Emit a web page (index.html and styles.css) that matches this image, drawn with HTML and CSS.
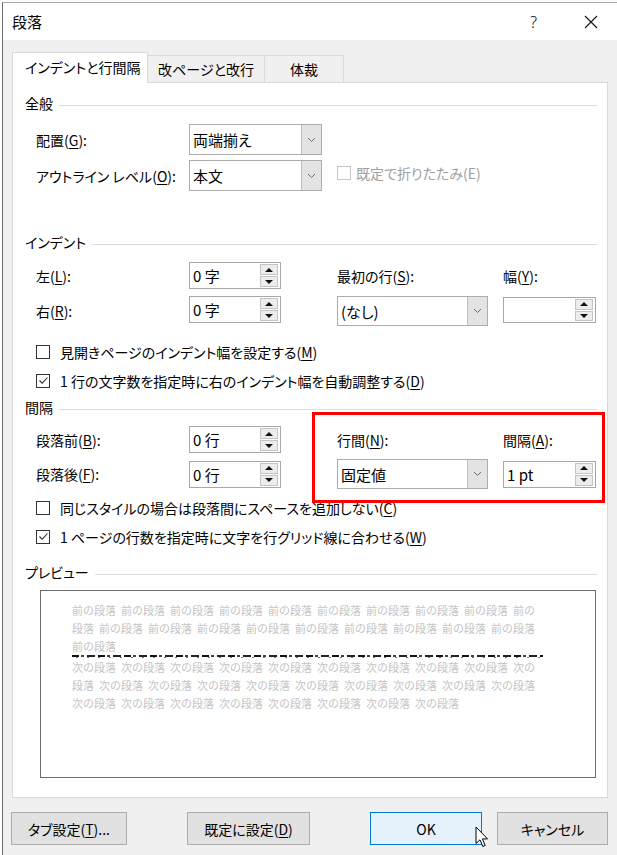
FILE: index.html
```html
<!DOCTYPE html>
<html lang="ja">
<head>
<meta charset="utf-8">
<title>段落</title>
<link rel="stylesheet" href="styles.css">
</head>
<body>
<div class="dialog">
  <div class="titlebar">
    <span class="title">段落</span>
    <span class="help">?</span>
    <svg class="close" width="14" height="14" viewBox="0 0 14 14"><path d="M1 1 L13 13 M13 1 L1 13" stroke="#111" stroke-width="1.1" fill="none"/></svg>
  </div>
  <div class="body">
    <div class="tabs">
      <div class="tab active">インデントと行間隔</div>
      <div class="tab">改ページと改行</div>
      <div class="tab narrow">体裁</div>
    </div>
    <div class="panel">
      <div class="section-head s-general"><span>全般</span><i></i></div>
      <div class="grid-general">
        <div class="label">配置(<u>G</u>):</div>
        <div class="select w133"><span class="val">両端揃え</span><span class="drop"><svg width="9" height="6" viewBox="0 0 9 6"><path d="M1 1 L4.5 4.5 L8 1" stroke="#6b6b6b" fill="none"/></svg></span></div>
        <div></div>
        <div class="label">アウトライン レベル(<u>O</u>):</div>
        <div class="select w133"><span class="val">本文</span><span class="drop"><svg width="9" height="6" viewBox="0 0 9 6"><path d="M1 1 L4.5 4.5 L8 1" stroke="#6b6b6b" fill="none"/></svg></span></div>
        <div class="check disabled"><span class="box"></span><span>既定で折りたたみ(E)</span></div>
      </div>

      <div class="section-head s-indent"><span>インデント</span><i></i></div>
      <div class="grid-four g-indent">
        <div class="label">左(<u>L</u>):</div>
        <div class="spin"><span class="val">0 字</span><span class="arrows"><span class="up"></span><span class="down"></span></span></div>
        <div class="label">最初の行(<u>S</u>):</div>
        <div class="label">幅(<u>Y</u>):</div>
        <div class="label">右(<u>R</u>):</div>
        <div class="spin top"><span class="val">0 字</span><span class="arrows"><span class="up"></span><span class="down"></span></span></div>
        <div class="select w151"><span class="val">(なし)</span><span class="drop"><svg width="9" height="6" viewBox="0 0 9 6"><path d="M1 1 L4.5 4.5 L8 1" stroke="#6b6b6b" fill="none"/></svg></span></div>
        <div class="spin w93 top1"><span class="val"></span><span class="arrows"><span class="up"></span><span class="down"></span></span></div>
      </div>
      <div class="checks c-indent">
        <div class="check"><span class="box"></span><span>見開きページのインデント幅を設定する(<u>M</u>)</span></div>
        <div class="check"><span class="box"><svg width="11" height="11" viewBox="0 0 11 11"><path d="M1.5 5.5 L4.2 8.2 L9.5 2.5" stroke="#333" stroke-width="1.1" fill="none"/></svg></span><span>1 行の文字数を指定時に右のインデント幅を自動調整する(<u>D</u>)</span></div>
      </div>

      <div class="section-head s-space"><span>間隔</span><i></i></div>
      <div class="grid-four g-space">
        <div class="label">段落前(<u>B</u>):</div>
        <div class="spin"><span class="val">0 行</span><span class="arrows"><span class="up"></span><span class="down"></span></span></div>
        <div class="label">行間(<u>N</u>):</div>
        <div class="label">間隔(<u>A</u>):</div>
        <div class="label">段落後(<u>F</u>):</div>
        <div class="spin"><span class="val">0 行</span><span class="arrows"><span class="up"></span><span class="down"></span></span></div>
        <div class="select w151"><span class="val">固定値</span><span class="drop"><svg width="9" height="6" viewBox="0 0 9 6"><path d="M1 1 L4.5 4.5 L8 1" stroke="#6b6b6b" fill="none"/></svg></span></div>
        <div class="spin w93"><span class="val">1 pt</span><span class="arrows"><span class="up"></span><span class="down"></span></span></div>
      </div>
      <div class="checks c-space">
        <div class="check"><span class="box"></span><span>同じスタイルの場合は段落間にスペースを追加しない(<u>C</u>)</span></div>
        <div class="check"><span class="box"><svg width="11" height="11" viewBox="0 0 11 11"><path d="M1.5 5.5 L4.2 8.2 L9.5 2.5" stroke="#333" stroke-width="1.1" fill="none"/></svg></span><span>1 ページの行数を指定時に文字を行グリッド線に合わせる(<u>W</u>)</span></div>
      </div>

      <div class="section-head s-preview"><span>プレビュー</span><i></i></div>
      <div class="preview">
        <div class="pline"><span>前の段落</span><span>前の段落</span><span>前の段落</span><span>前の段落</span><span>前の段落</span><span>前の段落</span><span>前の段落</span><span>前の段落</span><span>前の段落</span><span>前の</span></div>
        <div class="pline"><span>段落</span><span>前の段落</span><span>前の段落</span><span>前の段落</span><span>前の段落</span><span>前の段落</span><span>前の段落</span><span>前の段落</span><span>前の段落</span><span>前の段落</span></div>
        <div class="pline"><span>前の段落</span></div>
        <div class="dash"></div>
        <div class="pline"><span>次の段落</span><span>次の段落</span><span>次の段落</span><span>次の段落</span><span>次の段落</span><span>次の段落</span><span>次の段落</span><span>次の段落</span><span>次の段落</span><span>次の</span></div>
        <div class="pline"><span>段落</span><span>次の段落</span><span>次の段落</span><span>次の段落</span><span>次の段落</span><span>次の段落</span><span>次の段落</span><span>次の段落</span><span>次の段落</span><span>次の段落</span></div>
        <div class="pline"><span>次の段落</span><span>次の段落</span><span>次の段落</span><span>次の段落</span><span>次の段落</span><span>次の段落</span><span>次の段落</span><span>次の段落</span></div>
      </div>

      <div class="highlight"></div>
    </div>

    <div class="buttons">
      <div class="group">
        <div class="btn b-tab">タブ設定(<u>T</u>)...</div>
        <div class="btn b-default">既定に設定(<u>D</u>)</div>
      </div>
      <div class="group">
        <div class="btn b-ok primary">OK</div>
        <div class="btn b-cancel">キャンセル</div>
      </div>
    </div>
  </div>
  <svg class="cursor" width="14" height="23" viewBox="0 0 14 23"><path d="M1 1 L1 17.5 L5 13.8 L7.8 20.5 L10.2 19.5 L7.4 12.9 L12.5 12.9 Z" fill="#fff" stroke="#000" stroke-width="1" stroke-linejoin="round"/></svg>
</div>
</body>
</html>
```

FILE: styles.css
```css
* { box-sizing: border-box; }

html, body {
  margin: 0;
  padding: 0;
  background: #ffffff;
}

body {
  font-family: "Noto Sans CJK JP", "Noto Sans", sans-serif;
  font-size: 14px;
  font-feature-settings: "palt";
  color: #000;
  width: 617px;
  height: 855px;
  overflow: hidden;
}

u { text-decoration: underline; text-underline-offset: 2px; text-decoration-thickness: 1px; }

.dialog {
  position: relative;
  margin: 2px 0 0 2px;
  border-top: 1px solid #a8a8a8;
  border-left: 1px solid #6e6e6e;
  height: 853px;
  background: #f0f0f0;
}

.titlebar {
  height: 37px;
  background: #fff;
  display: flex;
  align-items: center;
  padding-left: 9px;
  font-size: 15px;
}

.title { flex: 1; }

.help {
  font-family: "Noto Sans", sans-serif;
  font-weight: 300;
  font-size: 16px;
  margin-right: 47px;
}

.close { margin-right: 19px; }

.body { padding-top: 12px; }

.tabs {
  display: flex;
  align-items: flex-end;
  padding-left: 9px;
  height: 30px;
}

.tab {
  height: 27px;
  padding: 0;
  display: flex;
  align-items: center;
  justify-content: center;
  white-space: nowrap;
  background: #f0f0f0;
  border: 1px solid #d9d9d9;
  border-bottom: none;
  border-left: none;
  width: 117px;
}

.tab.narrow { width: 79px; }

.tab.active {
  background: #fff;
  height: 31px;
  width: 136px;
  border-left: 1px solid #d9d9d9;
  margin-bottom: -1px;
  position: relative;
  z-index: 2;
  justify-content: flex-start;
  padding-left: 12px;
  padding-bottom: 2px;
}

.panel {
  position: relative;
  margin: 0 9px;
  background: #fff;
  border: 1px solid #d9d9d9;
  padding: 10px 10px 19px 12px;
  height: 716px;
}

.section-head {
  display: flex;
  align-items: center;
  height: 20px;
}

.section-head i {
  flex: 1;
  height: 1px;
  background: #dcdcdc;
  margin-left: 6px;
  margin-top: 4px;
}

.s-indent { margin-top: 41px; }
.s-space { margin-top: 2px; }
.s-preview { margin-top: 11px; }

.label { align-self: center; white-space: nowrap; }

.grid-general {
  margin: 11px 0 0 11px;
  display: grid;
  grid-template-columns: 153px 148px auto;
  grid-template-rows: 31px 31px;
  row-gap: 5px;
  align-items: center;
}

.grid-four {
  margin-left: 11px;
  display: grid;
  grid-template-columns: 153px 148px 166px 93px;
}

.g-indent {
  margin-top: 10px;
  grid-template-rows: 27px 30px;
  row-gap: 7px;
}

.g-space {
  margin-top: 9px;
  grid-template-rows: 27px 30px;
  row-gap: 6px;
}

.select {
  height: 31px;
  border: 1px solid #adadad;
  background: #fff;
  display: flex;
  align-items: center;
  padding-left: 3px;
  font-size: 15px;
}

.g-indent .select, .g-space .select { height: 30px; }

.w133 { width: 133px; }
.w151 { width: 151px; }

.select .val { flex: 1; }

.select .drop {
  align-self: stretch;
  width: 20px;
  background: #e3e3e3;
  border-left: 1px solid #bdbdbd;
  display: flex;
  align-items: center;
  justify-content: center;
}

.spin {
  width: 92px;
  height: 27px;
  border: 1px solid #a8a8a8;
  background: #fff;
  display: flex;
  align-items: center;
  padding: 1px 1px 1px 3px;
  align-self: center;
  font-size: 15px;
}

.spin.top { align-self: start; }
.spin.top1 { align-self: start; margin-top: 1px; height: 26px; }

.spin.w93 { width: 93px; }

.spin .val { flex: 1; }

.spin .arrows {
  align-self: stretch;
  width: 18px;
  margin-right: 1px;
  display: flex;
  flex-direction: column;
  gap: 1px;
}

.spin .up, .spin .down {
  flex: 1;
  background: #ececec;
  border: 1px solid #c4c4c4;
  display: flex;
  align-items: center;
  justify-content: center;
}

.spin .up::after {
  content: "";
  border-left: 4px solid transparent;
  border-right: 4px solid transparent;
  border-bottom: 4px solid #111;
}

.spin .down::after {
  content: "";
  border-left: 4px solid transparent;
  border-right: 4px solid transparent;
  border-top: 4px solid #111;
}

.check {
  display: flex;
  align-items: center;
  gap: 10px;
  white-space: nowrap;
}

.check .box {
  width: 14px;
  height: 14px;
  border: 1px solid #333;
  background: #fff;
  display: flex;
  align-items: center;
  justify-content: center;
}

.check.disabled { color: #a0a0a0; gap: 5px; }
.check.disabled .box { border-color: #c6c6c6; }

.grid-general .check { position: relative; top: -3px; }

.checks { margin-left: 11px; }
.checks .check { height: 29px; }
.c-indent { margin-top: 11px; }
.c-space { margin-top: 4px; }

.preview {
  margin: 8px 0 0 15px;
  width: 556px;
  height: 188px;
  border: 1px solid #6d6d6d;
  padding: 10px 0 0 31px;
  color: #c4c4c4;
  font-size: 11px;
  font-feature-settings: normal;
}

.pline {
  height: 18px;
  line-height: 18px;
  white-space: nowrap;
}

.pline span {
  display: inline-block;
  margin-right: 5px;
}

.dash {
  width: 471px;
  height: 3px;
  background:
    repeating-linear-gradient(90deg, #111 0 7px, transparent 7px 9px, #444 9px 12px, transparent 12px 15px, #222 15px 23px, transparent 23px 26px) top / 100% 2px no-repeat,
    repeating-linear-gradient(90deg, transparent 0 4px, #777 4px 6px, transparent 6px 11px) bottom / 100% 1px no-repeat;
}

.highlight {
  position: absolute;
  left: 299px;
  top: 329px;
  width: 293px;
  height: 91px;
  border: 3px solid #ff0000;
}

.buttons {
  margin: 14px 9px 0 8px;
  display: flex;
  justify-content: space-between;
}

.group { display: flex; }

.btn {
  height: 33px;
  background: #e1e1e1;
  border: 1px solid #adadad;
  display: flex;
  align-items: center;
  justify-content: center;
}

.b-tab { width: 116px; }
.b-default { width: 123px; margin-left: 60px; }
.b-ok { width: 112px; }
.b-cancel { width: 111px; margin-left: 15px; }

.btn.primary {
  background: #e5f1fb;
  border: 1px solid #0078d7;
}

.cursor {
  position: absolute;
  left: 472px;
  top: 823px;
}
```
